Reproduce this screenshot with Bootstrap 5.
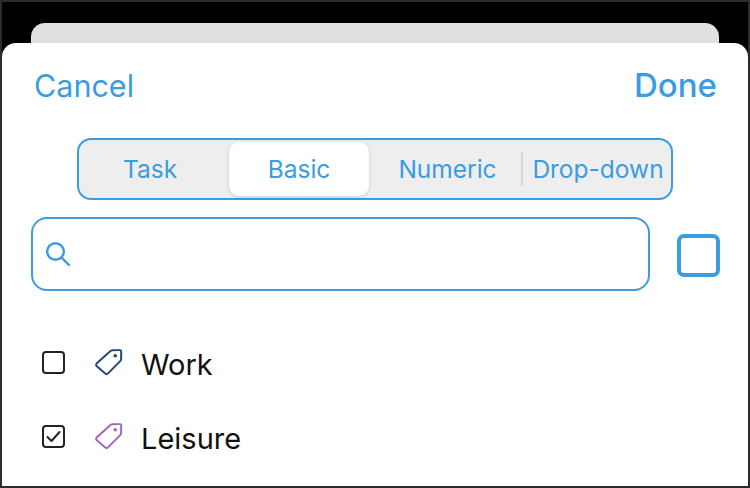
<!DOCTYPE html>
<html lang="en">
<head>
  <meta charset="UTF-8" />
  <meta name="viewport" content="width=device-width, initial-scale=1" />
  <title>Add tag</title>
  <link href="https://cdn.jsdelivr.net/npm/bootstrap@5.3.0/dist/css/bootstrap.min.css" rel="stylesheet" />
  <style>
    html, body {
      height: 100%;
    }
    body {
      background-color: #000;
      font-family: 'Inter', 'Liberation Sans', sans-serif;
      overflow: hidden;
    }
    .marco {
      height: 488px;
      border: 2px solid #2c2c2c;
      padding-top: 21px;
      overflow: hidden;
    }
    .hoja-fondo {
      height: 20px;
      margin: 0 29px;
      background-color: #e0e0e0;
      border-radius: 14px 14px 0 0;
    }
    .hoja {
      background-color: #fff;
      border-radius: 14px 14px 0 0;
      height: 443px;
      padding: 0 28px 0 29px;
    }
    .barra {
      height: 95px;
      padding: 0 3px 10px 3px;
    }
    .barra a {
      color: #3b9ce0;
      font-size: 30.5px;
      text-decoration: none;
    }
    .barra a.hecho {
      font-weight: 500;
      font-size: 33px;
    }
    .segmento {
      width: 596px;
      height: 62px;
      margin-left: 46px;
      border: 2px solid #3b9ce0;
      border-radius: 14px;
      background-color: #eeeeee;
      padding: 2px;
    }
    .segmento a {
      color: #3b9ce0;
      font-size: 24.5px;
      padding-top: 1px;
      text-decoration: none;
      border-radius: 10px;
      white-space: nowrap;
    }
    .segmento a.tarea {
      width: 138px;
      margin-right: 10px;
    }
    .segmento a.activo {
      width: 140px;
      margin-right: 5px;
      background-color: #fff;
      box-shadow: 0 1px 4px rgba(0, 0, 0, .14);
    }
    .segmento a.numerico {
      width: 147px;
    }
    .segmento a.desplegable {
      flex: 1 1 0;
      padding-left: 4px;
    }
    .separador {
      width: 2px;
      height: 34px;
      background-color: #d8d8d8;
      flex: none;
    }
    .fila-buscar {
      margin-top: 17px;
      gap: 27px;
    }
    .buscador {
      width: 619px;
      height: 74px;
      border: 2px solid #3b9ce0;
      border-radius: 16px;
      padding-left: 12px;
      flex: none;
    }
    .buscador input {
      border: 0;
      outline: 0;
      flex: 1;
      min-width: 0;
      background: transparent;
    }
    .casilla-grande {
      width: 43px;
      height: 43px;
      margin-top: 2px;
      border: 4px solid #3b9ce0;
      border-radius: 7px;
      flex: none;
    }
    .lista {
      margin-top: 34px;
      padding-left: 11px;
    }
    .lista li {
      height: 74px;
      font-size: 29px;
      color: #111;
    }
    .lista li > span:last-child {
      margin-top: 6px;
    }
    .casilla {
      width: 23px;
      height: 23px;
      border: 2px solid #222;
      border-radius: 4px;
      flex: none;
    }
    .etiqueta-icono {
      margin: 0 18px 0 30px;
      flex: none;
    }
  </style>
</head>
<body>
  <div class="marco">
    <div class="hoja-fondo"></div>
    <div class="hoja">
      <div class="barra d-flex justify-content-between align-items-center">
        <a href="#">Cancel</a>
        <a href="#" class="hecho">Done</a>
      </div>

      <div class="segmento d-flex align-items-stretch">
        <a href="#" class="tarea d-flex align-items-center justify-content-center">Task</a>
        <a href="#" class="activo d-flex align-items-center justify-content-center">Basic</a>
        <a href="#" class="numerico d-flex align-items-center justify-content-center">Numeric</a>
        <div class="separador align-self-center"></div>
        <a href="#" class="desplegable d-flex align-items-center justify-content-center">Drop-down</a>
      </div>

      <div class="fila-buscar d-flex align-items-center">
        <div class="buscador d-flex align-items-center gap-2">
          <svg width="26" height="26" viewBox="0 0 26 26" fill="none" stroke="#3b9ce0" stroke-width="2.4" stroke-linecap="round">
            <circle cx="10.5" cy="10.5" r="8.3" />
            <path d="M16.8 16.8 24 24" />
          </svg>
          <input type="text" aria-label="Search" />
        </div>
        <div class="casilla-grande"></div>
      </div>

      <ul class="lista list-unstyled mb-0">
        <li class="d-flex align-items-center">
          <span class="casilla"></span>
          <svg class="etiqueta-icono" width="28" height="28" viewBox="0 0 28 28" fill="none" stroke="#24477a" stroke-width="2" stroke-linejoin="round">
            <path d="M1.6 15.6 15.2 3.2c.6-.6 1.2-.8 2-.9l7-.4c1.2-.1 2.1.8 2 2l-.1 7.2c-.1.8-.3 1.4-.9 2L13 25.4c-.8.8-2 .8-2.8 0l-8.6-7.4c-.7-.7-.7-1.7 0-2.4z" />
            <circle cx="20.2" cy="7.8" r="1.8" fill="#24477a" stroke="none" />
          </svg>
          <span>Work</span>
        </li>
        <li class="d-flex align-items-center">
          <span class="casilla d-flex align-items-center justify-content-center">
            <svg width="15" height="13" viewBox="0 0 15 13" fill="none" stroke="#222" stroke-width="2" stroke-linecap="round" stroke-linejoin="round">
              <path d="M1.5 7 5.5 11 13.5 2" />
            </svg>
          </span>
          <svg class="etiqueta-icono" width="28" height="28" viewBox="0 0 28 28" fill="none" stroke="#a366bb" stroke-width="2" stroke-linejoin="round">
            <path d="M1.6 15.6 15.2 3.2c.6-.6 1.2-.8 2-.9l7-.4c1.2-.1 2.1.8 2 2l-.1 7.2c-.1.8-.3 1.4-.9 2L13 25.4c-.8.8-2 .8-2.8 0l-8.6-7.4c-.7-.7-.7-1.7 0-2.4z" />
            <circle cx="20.2" cy="7.8" r="1.8" fill="#a366bb" stroke="none" />
          </svg>
          <span>Leisure</span>
        </li>
      </ul>
    </div>
  </div>
  <script src="https://cdn.jsdelivr.net/npm/bootstrap@5.3.0/dist/js/bootstrap.bundle.min.js"></script>
</body>
</html>
